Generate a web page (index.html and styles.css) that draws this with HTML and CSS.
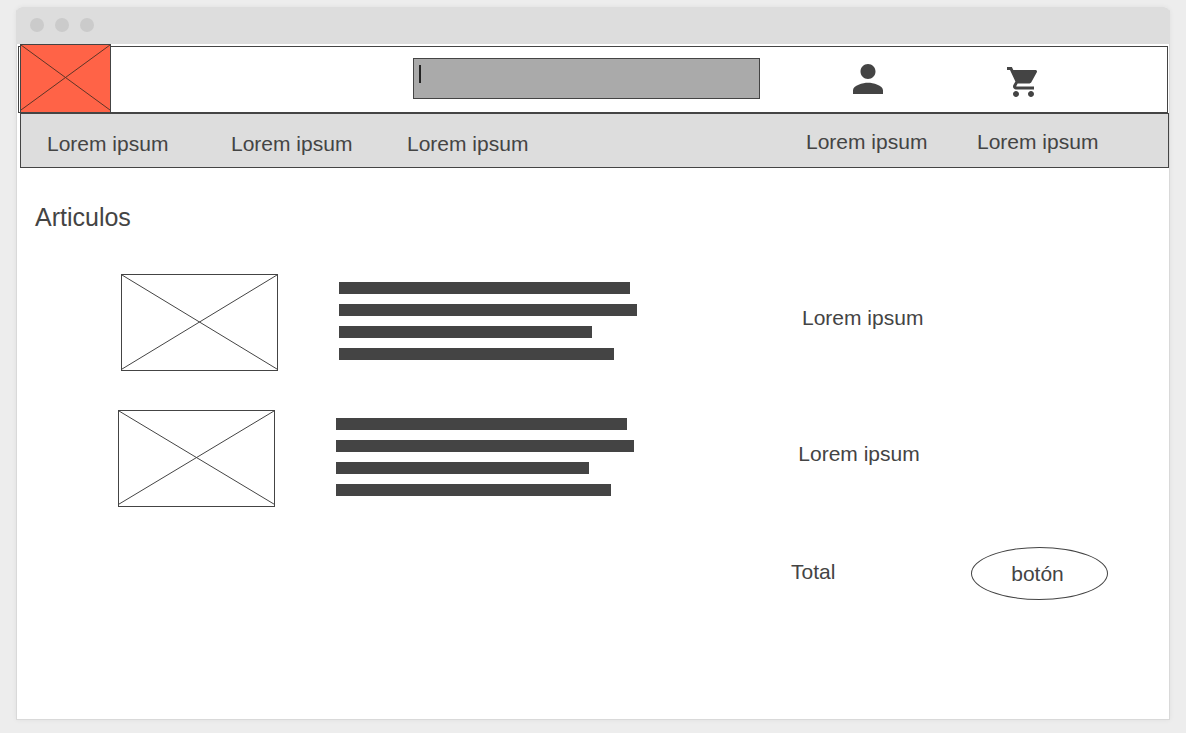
FILE: index.html
```html
<!DOCTYPE html>
<html lang="es">
<head>
<meta charset="utf-8">
<title>Articulos</title>
<link rel="stylesheet" href="styles.css">
</head>
<body>
<div class="window">
  <div class="titlebar"><span class="dot"></span><span class="dot"></span><span class="dot"></span></div>
  <header class="header">
    <a class="logo" href="#" aria-label="Logo">
      <svg class="cross" viewBox="0 0 100 100" preserveAspectRatio="none"><path d="M0 0L100 97M100 0L0 97"/></svg>
    </a>
    <div class="search">
      <input class="search-input" type="text" aria-label="Buscar">
      <span class="caret"></span>
    </div>
    <a class="icon-link" href="#" aria-label="Cuenta">
      <svg class="icon" width="30" height="30" viewBox="4 4 16 16"><path d="M12 12c2.21 0 4-1.79 4-4s-1.79-4-4-4-4 1.79-4 4 1.79 4 4 4zm0 2c-2.67 0-8 1.34-8 4v2h16v-2c0-2.66-5.33-4-8-4z"/></svg>
    </a>
    <a class="icon-link" href="#" aria-label="Carrito">
      <svg class="icon" width="30" height="36" viewBox="1 -2 20 24"><path d="M7 18c-1.100 0-1.990.9-1.990 2S5.900 22 7 22s2-.9 2-2-.9-2-2-2zM1 2v2h2l3.600 7.590-1.350 2.450c-.16.280-.25.610-.25.960 0 1.100.9 2 2 2h12v-2H7.420c-.14 0-.25-.11-.25-.25l.03-.12.9-1.630h7.450c.75 0 1.410-.41 1.750-1.030l3.580-6.490c.08-.14.120-.31.120-.48 0-.55-.45-1-1-1H5.210l-.94-2H1zm16 16c-1.100 0-1.990.9-1.990 2s.89 2 1.990 2 2-.9 2-2-.9-2-2-2z"/></svg>
    </a>
  </header>
  <nav class="nav">
    <a class="nav-link" href="#">Lorem ipsum</a>
    <a class="nav-link" href="#">Lorem ipsum</a>
    <a class="nav-link" href="#">Lorem ipsum</a>
    <a class="nav-link nav-link-end" href="#">Lorem ipsum</a>
    <a class="nav-link nav-link-end" href="#">Lorem ipsum</a>
  </nav>
  <main class="main">
    <h1 class="title">Articulos</h1>
    <section class="items">
      <article class="item">
        <div class="thumb"><svg class="cross" viewBox="0 0 100 100" preserveAspectRatio="none"><path d="M0 0L100 99M100 0L0 99"/></svg></div>
        <div class="lines"><span class="line line-a"></span><span class="line line-b"></span><span class="line line-c"></span><span class="line line-d"></span></div>
        <p class="price">Lorem ipsum</p>
      </article>
      <article class="item item-alt">
        <div class="thumb"><svg class="cross" viewBox="0 0 100 100" preserveAspectRatio="none"><path d="M0 0L100 98M100 0L0 98"/></svg></div>
        <div class="lines"><span class="line line-a"></span><span class="line line-b"></span><span class="line line-c"></span><span class="line line-d"></span></div>
        <p class="price">Lorem ipsum</p>
      </article>
    </section>
    <div class="summary">
      <p class="total">Total</p>
      <button class="button" type="button">botón</button>
    </div>
  </main>
</div>
</body>
</html>
```
FILE: styles.css
```css
* { box-sizing: border-box; }

body {
  display: flex;
  min-height: 100vh;
  margin: 0;
  padding: 7px 16px 13px;
  background: #ededed;
  color: #444;
  font: 21px/24px "Liberation Sans", Arial, sans-serif;
}

a { color: inherit; text-decoration: none; }
p, h1 { margin: 0; }

.window {
  flex: 1;
  border-radius: 6px 6px 0 0;
  background:
    linear-gradient(#fff, #fff) 1px 0 / calc(100% - 2px) calc(100% - 1px) no-repeat,
    #d9d9d9;
  box-shadow: 0 0 5px rgba(0, 0, 0, 0.06);
}

.titlebar {
  display: flex;
  align-items: center;
  gap: 11px;
  height: 37px;
  padding: 0 14px 2px;
  border-radius: 6px 6px 0 0;
  background: #ddd;
}

.dot {
  width: 14px;
  height: 14px;
  border-radius: 50%;
  background: #cbcbcb;
}

.header {
  display: grid;
  grid-template-columns: 394fr 347fr 93fr 154fr 160fr;
  align-items: center;
  height: 67px;
  margin: 2px 2px 0;
  border: 1px solid #444;
}

.logo {
  width: 91px;
  height: 69px;
  margin: -3px 0 0 1px;
  border: 1px solid #444;
  background: #ff6347;
}

.search { position: relative; grid-column: 2; margin-bottom: 3px; }

.search-input {
  display: block;
  width: 100%;
  height: 41px;
  padding: 0 6px;
  border: 1px solid #444;
  border-radius: 0;
  background: #aaa;
  font: inherit;
}

.caret {
  position: absolute;
  top: 7px;
  left: 6px;
  width: 2px;
  height: 18px;
  background: #222;
}

.icon-link { display: flex; grid-column: 4; padding-bottom: 2px; }
.icon-link + .icon-link { grid-column: 5; }
.icon { fill: #444; }

.cross {
  display: block;
  width: 100%;
  height: 100%;
  fill: none;
  stroke: #444;
  stroke-width: 1px;
}
.cross path { vector-effect: non-scaling-stroke; }

.logo .cross { stroke: #5e3527; }

.nav {
  display: grid;
  grid-template-columns: 184fr 176fr 399fr 171fr 191fr;
  align-items: center;
  height: 55px;
  margin: 0 1px 0 4px;
  padding-left: 26px;
  border: 1px solid #444;
  background: #ddd;
}

.nav-link { padding-top: 6px; }
.nav-link-end { padding-top: 2px; }

.main { padding: 35px 17px 0 19px; }

.title {
  font-size: 25px;
  font-weight: 400;
  line-height: 28px;
}

.items {
  display: grid;
  gap: 39px;
  padding-top: 43px;
}

.item {
  display: grid;
  grid-template-columns: 218fr 463fr 351fr;
  align-items: center;
  padding-left: 86px;
}
.item-alt { padding-right: 4px; padding-left: 83px; }

.thumb {
  width: 157px;
  height: 97px;
  border: 1px solid #444;
}

.lines { display: grid; gap: 10px; padding-bottom: 3px; }
.line { height: 12px; background: #444; }
.line-a { width: 291px; }
.line-b { width: 298px; }
.line-c { width: 253px; }
.line-d { width: 275px; }

.price { padding-bottom: 10px; }

.summary {
  display: grid;
  grid-template-columns: 756fr 180fr 182fr;
  align-items: center;
  padding-top: 40px;
}

.total { grid-column: 2; padding-bottom: 4px; }

.button {
  width: 137px;
  height: 53px;
  padding: 0 4px 0 0;
  border: 1px solid #444;
  border-radius: 50%;
  background: #fff;
  color: inherit;
  font: inherit;
}
```
